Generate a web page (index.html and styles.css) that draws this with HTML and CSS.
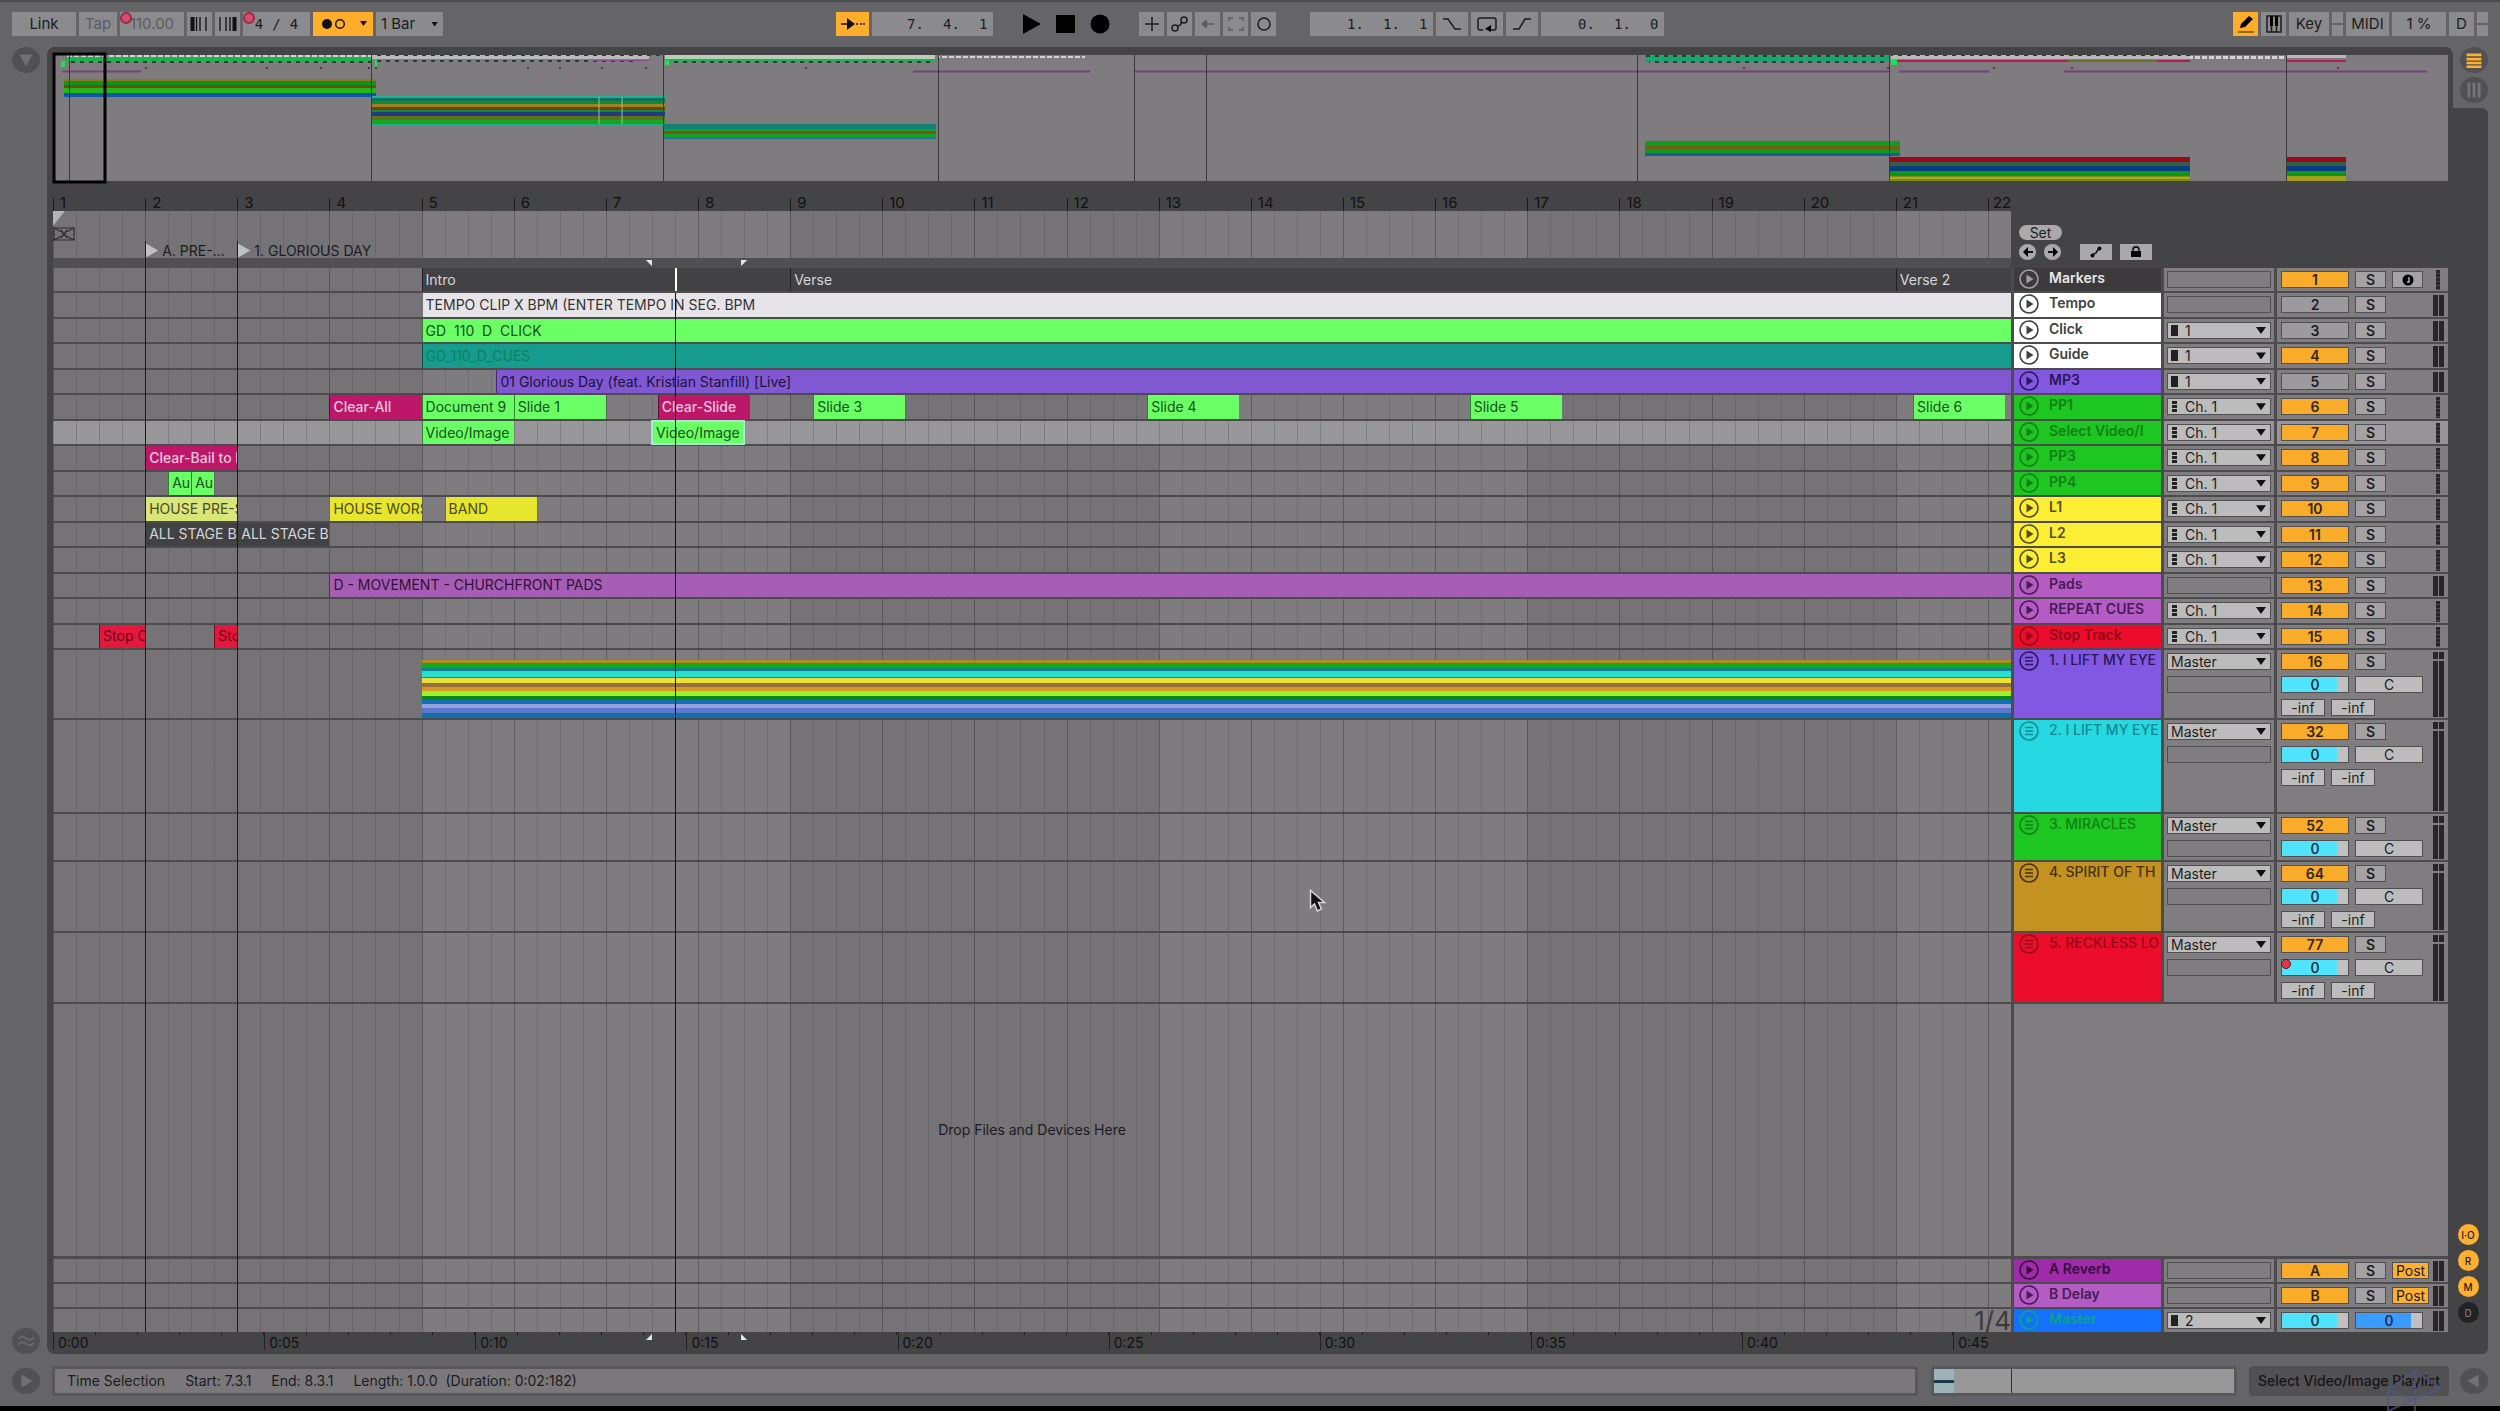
FILE: index.html
```html
<!DOCTYPE html>
<html lang="en">
<head>
<meta charset="utf-8">
<title>Arrangement</title>
<link rel="stylesheet" href="styles.css">
</head>
<body>
<svg class="defs" aria-hidden="true">
  <symbol id="play" viewBox="0 0 20 20"><circle cx="10" cy="10" r="9" fill="none" stroke="currentColor" stroke-width="1.6"/><path d="M7.5 5.5v9l7-4.500z" fill="currentColor"/></symbol>
  <symbol id="group" viewBox="0 0 20 20"><circle cx="10" cy="10" r="9" fill="none" stroke="currentColor" stroke-width="1.600"/><path d="M6 6.500h8M6 10h8M6 13.500h8" stroke="currentColor" stroke-width="1.500"/></symbol>
</svg>

<div class="app">
<header class="topbar">
  <div class="bar-left">
    <button class="tb w64">Link</button>
    <button class="tb w38 dim">Tap</button>
    <button class="tb w64 dim dot">110.00</button>
    <button class="tb w25" aria-label="Nudge down"><svg width="19" height="14"><path d="M2 0v14M6.500 0v14M10 0v14M16 0v14" stroke="#111" stroke-width="1.300"/><path d="M2.500 0v14" stroke="#111" stroke-width="4"/></svg></button>
    <button class="tb w25" aria-label="Nudge up"><svg width="19" height="14"><path d="M2 0v14M8 0v14M12 0v14" stroke="#111" stroke-width="1.300"/><path d="M16.500 0v14" stroke="#111" stroke-width="4"/></svg></button>
    <button class="tb w67 dot sig"><span>4</span><span>/</span><span>4</span></button>
    <button class="tb w60 on" aria-label="Metronome"><svg width="50" height="14"><circle cx="9" cy="7" r="5" fill="#111"/><circle cx="22" cy="7" r="4.300" fill="none" stroke="#111" stroke-width="1.400"/><path d="M42 4h7l-3.500 5z" fill="#111"/></svg></button>
    <button class="tb w67 menu">1 Bar<i class="tri"></i></button>
  </div>
  <div class="bar-mid">
    <button class="tb w33 on" aria-label="Follow"><svg width="24" height="14"><path d="M0 7h8M15 7h2M19 7h2M22 7h2" stroke="#111" stroke-width="1.600"/><path d="M6 1l8 6-8 6z" fill="#111"/></svg></button>
    <button class="tb pos w121"><span>7.</span><span>4.</span><span>1</span></button>
    <div class="transport">
      <button aria-label="Play"><svg width="20" height="20"><path d="M1 0v20l18-10z"/></svg></button>
      <button aria-label="Stop"><svg width="20" height="20"><path d="M0 1h19v18H0z"/></svg></button>
      <button aria-label="Record"><svg width="20" height="20"><circle cx="10" cy="10" r="9.500"/></svg></button>
    </div>
    <div class="set">
      <button class="tb w26" aria-label="Overdub"><svg width="16" height="16"><path d="M8 1v14M1 8h14" class="ln"/></svg></button>
      <button class="tb w26" aria-label="Automation arm"><svg width="18" height="16"><circle cx="13" cy="4" r="3" class="ln"/><circle cx="4" cy="12" r="3" class="ln"/><path d="M10.500 5.500l-1 3.500-3 1" class="ln"/></svg></button>
      <button class="tb w26" aria-label="Re-enable automation"><svg width="16" height="12" class="faint"><path d="M3 6h11" class="ln"/><path d="M1 6l6-5v10z" fill="currentColor"/></svg></button>
      <button class="tb w26" aria-label="Capture"><svg width="16" height="16" class="faint"><path d="M1 5V2h4M11 2h4v3M15 11v3h-4M5 14H1v-3" class="ln"/></svg></button>
      <button class="tb w26" aria-label="Session record"><svg width="16" height="16"><circle cx="8" cy="8" r="6" class="ln"/></svg></button>
    </div>
    <div class="set">
      <button class="tb pos w123"><span>1.</span><span>1.</span><span>1</span></button>
      <button class="tb w32" aria-label="Punch in"><svg width="20" height="14"><path d="M1 2h5l7 10h6" class="ln"/></svg></button>
      <button class="tb w32" aria-label="Loop"><svg width="20" height="16"><path d="M6 14H3c-1 0-2-1-2-2V4c0-1 1-2 2-2h14c1 0 2 1 2 2v8c0 1-1 2-2 2h-4" class="ln"/><path d="M14 9v7l-6-3z"/></svg></button>
      <button class="tb w32" aria-label="Punch out"><svg width="20" height="14"><path d="M1 12h6l6-10h6" class="ln"/></svg></button>
      <button class="tb pos w123"><span>0.</span><span>1.</span><span>0</span></button>
    </div>
  </div>
  <div class="bar-right">
    <button class="tb w26 on" aria-label="Draw mode"><svg width="18" height="18"><path d="M1 17h16" stroke="#7a5200" stroke-width="1.500"/><path d="M3 13l1-4 8-8 4 3-8 8z"/></svg></button>
    <button class="tb w26" aria-label="Computer keyboard"><svg width="16" height="18"><path d="M1 1h14v16H1zM5.500 1v16M10.500 1v16" class="ln"/><path d="M4 1h3v10H4zM9 1h3v10H9z"/></svg></button>
    <button class="tb w40">Key</button>
    <span class="lamp"><i></i><i></i></span>
    <button class="tb w43">MIDI</button>
    <button class="tb w54">1 %</button>
    <button class="tb w26">D</button>
    <span class="lamp"><i></i><i></i></span>
  </div>
</header>

<main class="main">
  <div class="rail">
    <button class="round" aria-label="Show browser"><svg viewBox="0 0 28 28"><path d="M7 8h14l-7 13z"/></svg></button>
    <button class="round" aria-label="Groove pool"><svg viewBox="0 0 28 28"><path d="M6 12c3-4 5-3 8-1s5 3 8-1M6 18c3-4 5-3 8-1s5 3 8-1" fill="none" stroke="#6b6b6d" stroke-width="2"/></svg></button>
  </div>

  <div class="frame">
    <svg class="overview" viewBox="0 0 2395 126" preserveAspectRatio="none">
      <defs>
        <pattern id="tickW" width="7" height="4" patternUnits="userSpaceOnUse"><rect width="5" height="4" fill="#d2d2d2"/></pattern>
        <pattern id="tickD" width="9" height="3" patternUnits="userSpaceOnUse"><rect width="4" height="3" fill="#2c3a38"/></pattern>
      </defs>
      <rect width="2395" height="126" fill="#7e7c7f"/>
      <g>
        <rect x="12" y="0" width="306" height="2" fill="url(#tickW)"/><rect x="12" y="2" width="306" height="4" fill="#12b84a"/><rect x="14" y="6" width="304" height="2" fill="url(#tickD)"/>
        <rect x="318" y="0" width="278" height="4" fill="#b9b9ba"/><rect x="318" y="0" width="292" height="1" fill="url(#tickD)"/><rect x="322" y="5" width="260" height="2" fill="url(#tickD)"/><rect x="540" y="5" width="56" height="1" fill="#8a4a90"/>
        <rect x="612" y="0" width="270" height="4" fill="#b9cbbb"/><rect x="612" y="4" width="270" height="3" fill="#12b84a"/><rect x="620" y="6" width="262" height="2" fill="url(#tickD)"/>
        <rect x="885" y="1" width="147" height="2" fill="url(#tickW)"/>
        <rect x="1592" y="1" width="244" height="6" fill="#14a86c"/><rect x="1592" y="0" width="244" height="2" fill="url(#tickD)"/><rect x="1596" y="6" width="240" height="2" fill="url(#tickD)"/>
        <rect x="1838" y="0" width="299" height="4" fill="#b9b9ba"/><rect x="1838" y="0" width="299" height="1" fill="url(#tickD)"/><rect x="1840" y="5" width="297" height="2" fill="#b51d4f"/><rect x="2015" y="5" width="90" height="2" fill="#6b6f2a"/>
        <rect x="2137" y="1" width="96" height="3" fill="url(#tickW)"/>
        <rect x="2233" y="0" width="60" height="3" fill="#b9b9ba"/><rect x="2233" y="5" width="60" height="2" fill="#b51d4f"/>
        <path d="M322 4h2v8h-2zM612 5h4v5h-4zM1838 4h6v6h-6zM8 6h4v6H8z" fill="#1be34e"/>
        <path d="M92 12h2v2h-2zM213 12h2v2h-2zM267 12h2v2h-2zM315 12h2v2h-2zM322 12h2v2h-2zM474 12h2v2h-2zM506 12h2v2h-2zM548 12h2v2h-2zM592 12h2v2h-2zM752 12h2v2h-2zM1690 12h2v2h-2zM1834 12h2v2h-2zM1940 12h2v2h-2zM2018 12h2v2h-2zM2284 12h2v2h-2z" fill="#702844"/>
      </g>
      <path d="M9 16.500h79M860 16.500h177M1081 16.500h755M1846 16.500h90M2011 16.500h363" stroke="#74407e" stroke-width="2"/>
      <g>
        <rect x="11" y="24" width="312" height="18" fill="#0c9420"/><rect x="11" y="24" width="312" height="2" fill="#8f7a18"/><rect x="11" y="30" width="312" height="3" fill="#704c10"/><rect x="11" y="33" width="312" height="5" fill="#22b81c"/><rect x="11" y="38" width="312" height="4" fill="#1055a8"/>
        <rect x="318" y="41" width="294" height="29" fill="#108c30"/><rect x="318" y="41" width="294" height="2" fill="#20b090"/><rect x="318" y="43" width="294" height="3" fill="#107060"/><rect x="318" y="49" width="294" height="3" fill="#a08020"/><rect x="318" y="52" width="294" height="3" fill="#744010"/><rect x="318" y="57" width="294" height="4" fill="#203c80"/><rect x="318" y="61" width="294" height="4" fill="#60701c"/><rect x="318" y="65" width="294" height="4" fill="#14a820"/><rect x="318" y="69" width="294" height="1" fill="#20b090"/>
        <path d="M546 42v27M569 42v27" stroke="#9cc090"/>
        <rect x="610" y="69" width="273" height="15" fill="#18a024"/><rect x="610" y="69" width="273" height="5" fill="#127f70"/><rect x="610" y="76" width="273" height="3" fill="#705818"/><rect x="610" y="83" width="273" height="1" fill="#2070a0"/>
        <rect x="1592" y="86" width="255" height="15" fill="#109c20"/><rect x="1592" y="91" width="255" height="3" fill="#785c14"/><rect x="1592" y="98" width="255" height="3" fill="#2058a0"/>
        <rect x="1836" y="102" width="301" height="5" fill="#9c0818"/><rect x="1836" y="107" width="301" height="4" fill="#306048"/><rect x="1836" y="111" width="301" height="5" fill="#083c80"/><rect x="1836" y="116" width="301" height="5" fill="#109420"/><rect x="1836" y="121" width="301" height="5" fill="#788c18"/><rect x="1836" y="122" width="301" height="2" fill="#b0a820"/>
        <rect x="2233" y="102" width="60" height="5" fill="#9c0818"/><rect x="2233" y="107" width="60" height="4" fill="#306048"/><rect x="2233" y="111" width="60" height="5" fill="#083c80"/><rect x="2233" y="116" width="60" height="5" fill="#109420"/><rect x="2233" y="121" width="60" height="5" fill="#a0a01c"/>
      </g>
      <path d="M16.500 0v126M318.500 0v126M610.500 0v126M885.500 0v126M1081.500 0v126M1153.500 0v126M1584.500 0v126M1836.500 0v126M2233.500 0v126" stroke="#3a3a3c"/>
      <rect x="1" y="-1" width="51" height="128" fill="none" stroke="#000" stroke-width="3"/>
    </svg>

    <ol class="bars">
      <li>1</li><li>2</li><li>3</li><li>4</li><li>5</li><li>6</li><li>7</li><li>8</li><li>9</li><li>10</li><li>11</li><li>12</li><li>13</li><li>14</li><li>15</li><li>16</li><li>17</li><li>18</li><li>19</li><li>20</li><li>21</li><li>22</li>
    </ol>

    <section class="arrange">
      <div class="guides" aria-hidden="true"><i class="mark" style="grid-column:17"></i><i class="mark" style="grid-column:33"></i><i class="head-line" style="grid-column:109"></i></div>

      <div class="scrub-row">
        <div class="scrub lane">
          <i class="start"></i>
          <svg class="fx" width="22" height="14"><path d="M1 1h20v12H1zM1 1l9 4.500v3L1 13M21 1l-9 4.500v3l9 4.500M7 1h8M7 13h8M8 3l6 8M14 3L8 11" fill="none" stroke="#2c2c2e" stroke-width="1.200"/></svg>
          <div class="locators">
            <span style="grid-column:17/33"><i></i>A. PRE-...</span>
            <span style="grid-column:33/100"><i></i>1. GLORIOUS DAY</span>
          </div>
        </div>
        <div class="tools">
          <button class="pill">Set</button>
          <div>
            <button class="dotbtn" aria-label="Previous locator"><svg width="12" height="12"><path d="M5 6h6" stroke="#111" stroke-width="2"/><path d="M1 6l5-5v10z"/></svg></button>
            <button class="dotbtn" aria-label="Next locator"><svg width="12" height="12"><path d="M1 6h6" stroke="#111" stroke-width="2"/><path d="M11 6L6 1v10z"/></svg></button>
            <button class="tool first" aria-label="Automation mode"><svg width="12" height="12"><circle cx="9.500" cy="2.500" r="2"/><circle cx="2.500" cy="9.500" r="2"/><path d="M2 9l4-2 3-5" fill="none" stroke="#111" stroke-width="1.500"/></svg></button>
            <button class="tool" aria-label="Lock envelopes"><svg width="12" height="12"><path d="M1 5h10v6H1z"/><path d="M3 6V3.500C3 0 9 0 9 3.500V6" fill="none" stroke="#111" stroke-width="1.600"/></svg></button>
          </div>
        </div>
      </div>
      <div class="loopbar"><i class="sel-a" style="grid-column:103/105"></i><i class="sel-b" style="grid-column:119/123"></i></div>

      <div class="tracks">
        <div class="row"><div class="lane"><div class="clip dark" style="grid-column:65/129">Intro</div><div class="clip dark" style="grid-column:129/321">Verse</div><div class="clip dark" style="grid-column:321/341">Verse 2</div><i class="now" style="grid-column:109"></i></div>
          <div class="name c-dark"><svg><use href="#play"/></svg>Markers</div><div class="io"><span class="slot"></span></div>
          <div class="mix"><button class="num on">1</button><button class="solo">S</button><button class="solo" aria-label="Arm"><svg width="12" height="12"><circle cx="6" cy="6" r="5.500"/><path d="M7 3v5M5 8h3" stroke="#aaa" stroke-width="1.500"/></svg></button><i class="meter one"></i></div></div>
        <div class="row"><div class="lane"><div class="clip white" style="grid-column:65/341">TEMPO CLIP X BPM (ENTER TEMPO IN SEG. BPM</div></div>
          <div class="name c-white"><svg><use href="#play"/></svg>Tempo</div><div class="io"><span class="slot"></span></div>
          <div class="mix"><button class="num">2</button><button class="solo">S</button><i class="meter"></i></div></div>
        <div class="row"><div class="lane"><div class="clip green" style="grid-column:65/341">GD&nbsp; 110&nbsp; D&nbsp; CLICK</div></div>
          <div class="name c-white"><svg><use href="#play"/></svg>Click</div><div class="io"><label class="pick out"><select aria-label="Click output"><option>1</option></select></label></div>
          <div class="mix"><button class="num">3</button><button class="solo">S</button><i class="meter"></i></div></div>
        <div class="row"><div class="lane"><div class="clip teal" style="grid-column:65/341">GD_110_D_CUES</div></div>
          <div class="name c-white"><svg><use href="#play"/></svg>Guide</div><div class="io"><label class="pick out"><select aria-label="Guide output"><option>1</option></select></label></div>
          <div class="mix"><button class="num on">4</button><button class="solo">S</button><i class="meter"></i></div></div>
        <div class="row"><div class="lane"><div class="clip violet" style="grid-column:78/341">01 Glorious Day (feat. Kristian Stanfill) [Live]</div></div>
          <div class="name c-violet"><svg><use href="#play"/></svg>MP3</div><div class="io"><label class="pick out"><select aria-label="MP3 output"><option>1</option></select></label></div>
          <div class="mix"><button class="num">5</button><button class="solo">S</button><i class="meter"></i></div></div>
        <div class="row"><div class="lane"><div class="clip pink" style="grid-column:49/65">Clear-All</div><div class="clip green" style="grid-column:65/81">Document 9</div><div class="clip green" style="grid-column:81/97">Slide 1</div><div class="clip pink" style="grid-column:106/122">Clear-Slide</div><div class="clip green" style="grid-column:133/149">Slide 3</div><div class="clip green" style="grid-column:191/207">Slide 4</div><div class="clip green" style="grid-column:247/263">Slide 5</div><div class="clip green" style="grid-column:324/340">Slide 6</div></div>
          <div class="name c-green"><svg><use href="#play"/></svg>PP1</div><div class="io"><label class="pick midi"><select aria-label="PP1 channel"><option>Ch. 1</option></select></label></div>
          <div class="mix"><button class="num on">6</button><button class="solo">S</button><i class="meter one"></i></div></div>
        <div class="row picked"><div class="lane"><div class="clip green" style="grid-column:65/81">Video/Image</div><div class="clip green chosen" style="grid-column:105/121">Video/Image</div></div>
          <div class="name c-green"><svg><use href="#play"/></svg>Select Video/I</div><div class="io"><label class="pick midi"><select aria-label="Video channel"><option>Ch. 1</option></select></label></div>
          <div class="mix"><button class="num on">7</button><button class="solo">S</button><i class="meter one"></i></div></div>
        <div class="row"><div class="lane"><div class="clip pink" style="grid-column:17/33">Clear-Bail to l</div></div>
          <div class="name c-green"><svg><use href="#play"/></svg>PP3</div><div class="io"><label class="pick midi"><select aria-label="PP3 channel"><option>Ch. 1</option></select></label></div>
          <div class="mix"><button class="num on">8</button><button class="solo">S</button><i class="meter one"></i></div></div>
        <div class="row"><div class="lane"><div class="clip green" style="grid-column:21/25">Au</div><div class="clip green" style="grid-column:25/29">Au</div></div>
          <div class="name c-green"><svg><use href="#play"/></svg>PP4</div><div class="io"><label class="pick midi"><select aria-label="PP4 channel"><option>Ch. 1</option></select></label></div>
          <div class="mix"><button class="num on">9</button><button class="solo">S</button><i class="meter one"></i></div></div>
        <div class="row"><div class="lane"><div class="clip pale" style="grid-column:17/33">HOUSE PRE-S</div><div class="clip yellow" style="grid-column:49/65">HOUSE WORS</div><div class="clip yellow" style="grid-column:69/85">BAND</div></div>
          <div class="name c-yellow"><svg><use href="#play"/></svg>L1</div><div class="io"><label class="pick midi"><select aria-label="L1 channel"><option>Ch. 1</option></select></label></div>
          <div class="mix"><button class="num on">10</button><button class="solo">S</button><i class="meter one"></i></div></div>
        <div class="row"><div class="lane"><div class="clip dark" style="grid-column:17/33">ALL STAGE Bl</div><div class="clip dark" style="grid-column:33/49">ALL STAGE Bl</div></div>
          <div class="name c-yellow"><svg><use href="#play"/></svg>L2</div><div class="io"><label class="pick midi"><select aria-label="L2 channel"><option>Ch. 1</option></select></label></div>
          <div class="mix"><button class="num on">11</button><button class="solo">S</button><i class="meter one"></i></div></div>
        <div class="row"><div class="lane"></div>
          <div class="name c-yellow"><svg><use href="#play"/></svg>L3</div><div class="io"><label class="pick midi"><select aria-label="L3 channel"><option>Ch. 1</option></select></label></div>
          <div class="mix"><button class="num on">12</button><button class="solo">S</button><i class="meter one"></i></div></div>
        <div class="row"><div class="lane"><div class="clip mauve" style="grid-column:49/341">D - MOVEMENT - CHURCHFRONT PADS</div></div>
          <div class="name c-mauve"><svg><use href="#play"/></svg>Pads</div><div class="io"><span class="slot"></span></div>
          <div class="mix"><button class="num on">13</button><button class="solo">S</button><i class="meter"></i></div></div>
        <div class="row"><div class="lane"></div>
          <div class="name c-mauve"><svg><use href="#play"/></svg>REPEAT CUES</div><div class="io"><label class="pick midi"><select aria-label="Repeat cues channel"><option>Ch. 1</option></select></label></div>
          <div class="mix"><button class="num on">14</button><button class="solo">S</button><i class="meter one"></i></div></div>
        <div class="row"><div class="lane"><div class="clip red" style="grid-column:9/17">Stop C</div><div class="clip red" style="grid-column:29/33">Sto</div></div>
          <div class="name c-red"><svg><use href="#play"/></svg>Stop Track</div><div class="io"><label class="pick midi"><select aria-label="Stop track channel"><option>Ch. 1</option></select></label></div>
          <div class="mix"><button class="num on">15</button><button class="solo">S</button><i class="meter one"></i></div></div>
      </div>

      <div class="row big h70"><div class="lane"><div class="stems" style="grid-column:65/341"></div></div>
        <div class="name c-violet"><svg><use href="#group"/></svg>1. I LIFT MY EYE</div><div class="io"><label class="pick"><select aria-label="Group 1 output"><option>Master</option></select></label><span class="slot"></span></div>
        <div class="mix"><button class="num on">16</button><button class="solo">S</button><input class="vol" aria-label="Volume" value="0"><input class="pan" aria-label="Pan" value="C"><input class="inf" aria-label="Send A" value="-inf"><input class="inf" aria-label="Send B" value="-inf"><i class="meter"></i></div></div>
      <div class="row big h94"><div class="lane"></div>
        <div class="name c-cyan"><svg><use href="#group"/></svg>2. I LIFT MY EYE</div><div class="io"><label class="pick"><select aria-label="Group 2 output"><option>Master</option></select></label><span class="slot"></span></div>
        <div class="mix"><button class="num on">32</button><button class="solo">S</button><input class="vol" aria-label="Volume" value="0"><input class="pan" aria-label="Pan" value="C"><input class="inf" aria-label="Send A" value="-inf"><input class="inf" aria-label="Send B" value="-inf"><i class="meter"></i></div></div>
      <div class="row big h48"><div class="lane"></div>
        <div class="name c-green"><svg><use href="#group"/></svg>3. MIRACLES</div><div class="io"><label class="pick"><select aria-label="Group 3 output"><option>Master</option></select></label><span class="slot"></span></div>
        <div class="mix"><button class="num on">52</button><button class="solo">S</button><input class="vol" aria-label="Volume" value="0"><input class="pan" aria-label="Pan" value="C"><i class="meter"></i></div></div>
      <div class="row big h71"><div class="lane"></div>
        <div class="name c-ochre"><svg><use href="#group"/></svg>4. SPIRIT OF TH</div><div class="io"><label class="pick"><select aria-label="Group 4 output"><option>Master</option></select></label><span class="slot"></span></div>
        <div class="mix"><button class="num on">64</button><button class="solo">S</button><input class="vol" aria-label="Volume" value="0"><input class="pan" aria-label="Pan" value="C"><input class="inf" aria-label="Send A" value="-inf"><input class="inf" aria-label="Send B" value="-inf"><i class="meter"></i></div></div>
      <div class="row big h71"><div class="lane"></div>
        <div class="name c-red"><svg><use href="#group"/></svg>5. RECKLESS LO</div><div class="io"><label class="pick"><select aria-label="Group 5 output"><option>Master</option></select></label><span class="slot"></span></div>
        <div class="mix"><button class="num on">77</button><button class="solo">S</button><span class="volwrap"><input class="vol" aria-label="Volume" value="0"></span><input class="pan" aria-label="Pan" value="C"><input class="inf" aria-label="Send A" value="-inf"><input class="inf" aria-label="Send B" value="-inf"><i class="meter"></i></div></div>

      <div class="row drop"><div class="lane"><p>Drop Files and Devices Here</p></div><div class="blank"></div></div>

      <div class="row ret"><div class="lane"></div>
        <div class="name c-purple"><svg><use href="#play"/></svg>A Reverb</div><div class="io"><span class="slot"></span></div>
        <div class="mix"><button class="num on">A</button><button class="solo">S</button><button class="post">Post</button><i class="meter"></i></div></div>
      <div class="row ret"><div class="lane"></div>
        <div class="name c-mauve"><svg><use href="#play"/></svg>B Delay</div><div class="io"><span class="slot"></span></div>
        <div class="mix"><button class="num on">B</button><button class="solo">S</button><button class="post">Post</button><i class="meter"></i></div></div>
      <div class="row ret last"><div class="lane"><b class="zoomlevel">1/4</b></div>
        <div class="name c-blue"><svg><use href="#play"/></svg>Master</div><div class="io"><label class="pick out"><select aria-label="Master output"><option>2</option></select></label></div>
        <div class="mix"><input class="vol" aria-label="Master volume" value="0"><input class="cue" aria-label="Cue volume" value="0"><i class="meter"></i></div></div>
    </section>

    <div class="timebar">
      <ol class="times"><li>0:00</li><li>0:05</li><li>0:10</li><li>0:15</li><li>0:20</li><li>0:25</li><li>0:30</li><li>0:35</li><li>0:40</li><li>0:45</li></ol>
      <div class="selbottom"><i class="sel-c" style="grid-column:103/105"></i><i class="sel-d" style="grid-column:119/123"></i></div>
    </div>
  </div>

  <aside class="side">
    <div class="views">
      <button class="round" aria-label="Arrangement view"><svg viewBox="0 0 28 28"><path d="M6 7h16v3H6zM6 11.500h16v3H6zM6 16h16v2.500H6zM6 20h16v2.500H6z" class="gold"/></svg></button>
      <button class="round" aria-label="Session view"><svg viewBox="0 0 28 28"><path d="M7 6h3v16H7zM12.500 6h3v16h-3zM18 6h3v16h-3z" class="greyed"/></svg></button>
    </div>
    <div class="sections"><button class="chip">I·O</button><button class="chip">R</button><button class="chip">M</button><button class="chip off">D</button></div>
  </aside>
</main>

<footer class="status">
  <button class="round" aria-label="Toggle info"><svg viewBox="0 0 28 28"><path d="M9 7v14l12-7z"/></svg></button>
  <div class="info"><span>Time Selection</span><span>Start: 7.3.1</span><span>End: 8.3.1</span><span>Length: 1.0.0&nbsp; (Duration: 0:02:182)</span></div>
  <div class="mini"><i class="note"></i><i class="cursor-line"></i></div>
  <div class="device">Select Video/Image Playlist</div>
  <button class="round" aria-label="Toggle detail"><svg viewBox="0 0 28 28"><path d="M19 7v14L7 14z"/></svg></button>
</footer>
</div>

<svg class="pointer" width="18" height="24" aria-hidden="true"><path d="M1.500 1.500v17l4-3.500 3 7 4-2-3-6.500h6z" fill="#111" stroke="#d8d8d8" stroke-width="1.500"/></svg>
<svg class="logo" width="56" height="42" aria-hidden="true"><path d="M2 42V21L29 2l26 17-28 12-25 11M29 2v40M2 21l25 10" fill="none" stroke="#55558c" stroke-width="2" opacity=".7"/></svg>
</body>
</html>
```
FILE: styles.css
```css
* { box-sizing: border-box; }
body { margin: 0; background: #000; color: #1c1c1e; font: 500 14px/16px Inter, "Liberation Sans", sans-serif; overflow: hidden; }
button, input, select { font: inherit; color: inherit; margin: 0; padding: 0; border: 0; border-radius: 0; }
button { cursor: pointer; display: flex; align-items: center; justify-content: center; white-space: nowrap; }
ol, p { margin: 0; padding: 0; list-style: none; }
.defs { display: none; }
.ln { fill: none; stroke: currentColor; stroke-width: 1.5; }
.faint { color: #5c5c5e; }
.app { height: calc(100vh - 5px); display: flex; flex-direction: column; background: #656567; border-top: 2px solid #4e4e50; }

/* Control bar */
.topbar { flex: none; height: 45px; padding: 10px 12px 0; display: grid; grid-template-columns: 1fr auto 1fr; align-items: start; }
.bar-left, .bar-mid, .bar-right, .set { display: flex; gap: 3px; }
.bar-right { justify-content: flex-end; }
.tb { height: 24px; background: #8b8b8d; font-weight: 400; font-size: 15px; position: relative; }
.tb.on { background: #ffad2b; }
.dim { color: #5c5c5e; }
.dot::before { content: ""; position: absolute; left: 0; top: 0; width: 8px; height: 8px; border-radius: 50%; border: 2px solid #a0254a; background: #d05068; }
.w25 { width: 25px; } .w26 { width: 25px; } .w32 { width: 32px; } .w33 { width: 33px; } .w38 { width: 38px; } .w40 { width: 40px; } .w43 { width: 43px; }
.w54 { width: 54px; } .w60 { width: 60px; } .w64 { width: 64px; } .w67 { width: 67px; } .w121 { width: 121px; } .w123 { width: 123px; }
.sig { gap: 9px; font-family: "DejaVu Sans Mono", monospace; font-size: 14px; }
.menu { gap: 16px; }
.tri { width: 7px; height: 5px; background: #111; clip-path: polygon(0 0, 100% 0, 50% 100%); }
.pos { justify-content: flex-end; font-family: "DejaVu Sans Mono", monospace; font-size: 14px; text-align: left; }
.pos span { width: 36px; }
.pos span:last-child { width: 14px; }
.transport { display: flex; gap: 14px; margin: 2px 26px 0 26px; }
.transport button { background: none; width: 20px; height: 20px; }
.bar-mid { gap: 3px; }
.set + .set { margin-left: 31px; }
.lamp { width: 11px; display: flex; flex-direction: column; gap: 2px; height: 24px; }
.lamp i { flex: 1; background: #8b8b8d; }

/* Main area */
.main { flex: 1; min-height: 0; display: flex; padding-right: 12px; }
.rail { width: 47px; display: flex; flex-direction: column; justify-content: space-between; align-items: center; padding: 0 0 0 5px; }
.round { width: 28px; height: 26px; border-radius: 50%; background: #515153; }
.round svg { width: 26px; height: 26px; fill: #717173; }
.round .gold { fill: #ffb02e; }
.round .greyed { fill: #757577; }
.frame { flex: 1; min-width: 0; display: flex; flex-direction: column; background: #444446; border-radius: 8px 8px 0 8px; padding: 8px 5px 0 6px; }
.overview { flex: none; width: 100%; height: 126px; overflow: visible; display: block; }
.bars { flex: none; height: 30px; margin-right: 437px; display: grid; grid-template-columns: repeat(21, 4fr) 1fr; align-items: end; color: #111; font-size: 15px; font-weight: 400; }
.bars li { min-width: 0; height: 16px; line-height: 15px; padding-left: 7px; position: relative; }
.bars li:last-child { padding-left: 5px; }
.bars li::before { content: ""; position: absolute; left: 0; bottom: 0; width: 1px; height: 13px; background: #1c1c1e; }
.arrange { flex: 1; min-height: 0; display: flex; flex-direction: column; position: relative; }

/* Lanes: sixteen columns per bar, light and dark four-bar bands */
.lane, .loopbar, .locators, .guides, .selbottom { display: grid; grid-template-columns: repeat(340, minmax(0, 1fr)); }
.lane {
  background:
    repeating-linear-gradient(90deg, rgba(20,20,22,.2) 0 1px, transparent 1px calc(400% / 85)),
    repeating-linear-gradient(90deg, rgba(30,30,32,.15) 0 1px, transparent 1px calc(100% / 85)),
    repeating-linear-gradient(90deg, #757376 0 calc(1600% / 85), #7e7c7f calc(1600% / 85) calc(3200% / 85));
  grid-template-rows: minmax(0, 1fr);
}
.guides { position: absolute; z-index: 2; left: 0; right: 437px; top: 0; bottom: 0; pointer-events: none; }
.guides i { width: 1px; background: #1a1a1c; }
.mark { margin-top: 30px; }
.guides .head-line { margin-top: 82px; background: #111; }
.now { width: 2px; background: #fff; grid-row: 1; z-index: 3; }
.scrub-row { flex: none; height: 47px; display: grid; grid-template-columns: minmax(0, 1fr) 434px; column-gap: 3px; }
.scrub { display: flex; flex-direction: column; gap: 1px; }
.start { width: 12px; height: 15px; background: #b4b4b6; clip-path: polygon(0 0, 100% 0, 0 100%); }
.fx { display: block; }
.locators span { display: flex; align-items: center; gap: 4px; white-space: nowrap; min-width: 0; height: 17px; font-size: 14px; font-weight: 400; }
.locators i { width: 13px; height: 15px; background: #c0c0c2; clip-path: polygon(0 0, 100% 50%, 0 100%); }
.tools { padding: 14px 0 0 5px; display: flex; flex-direction: column; gap: 4px; }
.tools div { display: flex; gap: 8px; }
.pill { width: 43px; height: 15px; border-radius: 8px; background: #a9a9ab; font-size: 14px; font-weight: 400; }
.dotbtn { width: 17px; height: 16px; border-radius: 50%; background: #a9a9ab; }
.tool { width: 32px; height: 16px; background: #a9a9ab; }
.tool.first { margin-left: 11px; }
.loopbar { flex: none; height: 10px; margin-right: 437px; background: #505052; align-items: center; }
.sel-a, .sel-b, .sel-c, .sel-d { width: 6px; height: 6px; background: #e8e8e8; }
.sel-a { clip-path: polygon(0 0, 100% 0, 100% 100%); justify-self: end; }
.sel-b { clip-path: polygon(0 0, 100% 0, 0 100%); justify-self: center; }
.sel-c { clip-path: polygon(100% 0, 100% 100%, 0 100%); justify-self: end; }
.sel-d { clip-path: polygon(0 0, 100% 100%, 0 100%); justify-self: center; }

.tracks { flex: none; height: 382px; display: grid; grid-auto-rows: minmax(0, 1fr); }
.row { display: grid; grid-template-columns: minmax(0, 1fr) 147px 110px 171px; grid-template-rows: minmax(0, 1fr); column-gap: 3px; background: #4c4c4e; padding-bottom: 2px; min-height: 0; }
.h70 { flex: none; height: 70px; }
.h94 { flex: none; height: 94px; }
.h48 { flex: none; height: 48px; }
.h71 { flex: none; height: 71px; }
.picked .lane { background: repeating-linear-gradient(90deg, rgba(30,30,32,.2) 0 1px, transparent 1px calc(100% / 85)), #979799; }
.picked .io, .picked .mix { background: #969496; }
.clip { grid-row: 1; overflow: hidden; white-space: nowrap; padding-left: 3px; display: flex; align-items: center; font-size: 14px; font-weight: 400; border-left: 1px solid rgba(0,0,0,.5); }
.dark { background: #424244; color: #d6d6d8; }
.white { background: #e6e4e8; color: #333; }
.green { background: #6bff66; color: #14501a; }
.teal { background: #169c8c; color: #0d8068; }
.violet { background: #8059d2; color: #1c1040; }
.pink { background: #bd1769; color: #f4c4dc; font-weight: 500; }
.pale { background: #d8e67c; color: #4a4c20; }
.yellow { background: #e6e62e; color: #4c4a08; }
.mauve { background: #a65db4; color: #321238; }
.red { background: #e6173c; color: #6c0418; }
.chosen { outline: 2px solid #a8e8d4; outline-offset: -1px; }
.stems { margin: 10px 0 0; background: linear-gradient(#b08c28 0 3px, #14a818 3px 8px, #10808c 8px 11px, #28e0d0 11px 17px, #128c98 17px 18px, #ece03c 18px 23px, #98703c 23px 27px, #d89828 27px 31px, #98f428 31px 36px, #10841c 36px 40px, #1070b8 40px 44px, #98a0dc 44px 48px, #5c78cc 48px 53px, #1070a8 53px); }

/* Track headers */
.name { display: flex; gap: 10px; padding: 0 5px; height: 100%; overflow: hidden; white-space: nowrap; font-weight: 600; font-size: 14px; line-height: 20px; color: #333; }
.name svg { flex: none; width: 20px; height: 20px; margin-top: 1px; }
.c-dark { background: #3c3a3c; color: #e8e8e8; }
.c-dark svg { color: #a0a0a0; }
.c-white { background: #fff; color: #404040; }
.c-violet { background: #8257e2; color: #2a1858; }
.c-green { background: #1ec622; color: #108016; }
.c-yellow { background: #fcee34; color: #544e10; }
.c-mauve { background: #b45cc4; color: #481c54; }
.c-red { background: #ec0c2c; color: #900818; }
.c-cyan { background: #26d8e2; color: #128890; }
.c-ochre { background: #c49220; color: #483008; }
.c-purple { background: #9e2ca8; color: #380c40; }
.c-blue { background: #1470ff; color: #0ca488; }
.big .name { font-weight: 500; }
.io, .mix { background: #7f7d80; }
.io { padding: 3px 3px 0; display: flex; flex-direction: column; gap: 6px; }
.slot { height: 17px; border: 1px solid #505052; flex: none; }
.pick { height: 17px; display: flex; align-items: center; border: 1px solid #505052; background: #bcbcbc; position: relative; flex: none; }
.pick select { appearance: none; background: none; width: 100%; height: 15px; line-height: 15px; padding-left: 3px; font-weight: 400; font-size: 14px; }
.out select, .midi select { padding-left: 17px; }
.pick::after { content: ""; position: absolute; right: 4px; top: 4px; width: 10px; height: 7px; background: #111; clip-path: polygon(0 0, 100% 0, 50% 100%); pointer-events: none; }
.out::before { content: ""; position: absolute; left: 3px; top: 2px; width: 7px; height: 11px; background: #222; }
.midi::before { content: ""; position: absolute; left: 4px; top: 2px; width: 5px; height: 12px; background: repeating-linear-gradient(#222 0 3px, #bcbcbc 3px 4px); }
.mix { position: relative; display: flex; flex-wrap: wrap; gap: 6px; align-content: flex-start; padding: 3px 18px 0 4px; }
.mix button, .mix input { height: 17px; border: 1px solid #505052; text-align: center; line-height: 15px; }
.num { width: 68px; background: #9c9a9c; font-weight: 600; }
.num.on { background: #f8ac2a; color: #33240a; }
.solo { width: 31px; background: #a4a2a4; font-weight: 600; }
.post { width: 37px; background: #ffb02e; font-weight: 400; }
.vol { width: 68px; background: linear-gradient(90deg, #50e4fc 84%, #c0c0c0 84%); }
.cue { width: 68px; background: linear-gradient(90deg, #3a9cff 84%, #c0c0c0 84%); }
.pan { width: 68px; background: #bcbcbc; font-weight: 400; }
.inf { width: 44px; background: #bcbcbc; font-weight: 400; }
.volwrap { position: relative; display: flex; }
.volwrap::before { content: ""; position: absolute; left: 0; top: 0; width: 8px; height: 8px; border-radius: 50%; border: 1px solid #601020; background: #e03848; }
.meter { position: absolute; right: 4px; top: 2px; bottom: 1px; width: 11px; background: linear-gradient(90deg, #262628 0 5px, transparent 5px 6px, #262628 6px); }
.meter.one { width: 4px; right: 8px; background: repeating-linear-gradient(#262628 0 3px, #48484a 3px 4px); }
.big .meter { background: linear-gradient(#7f7d80, #7f7d80) 0 7px / 11px 2px no-repeat, linear-gradient(90deg, #262628 0 5px, transparent 5px 6px, #262628 6px); }

.drop { flex: 1; grid-template-columns: minmax(0, 1fr) 434px; padding-bottom: 3px; }
.drop .lane { align-items: center; }
.drop p { grid-column: 1 / -1; text-align: center; font-size: 14px; font-weight: 400; }
.blank { background: #7f7d80; }
.ret { flex: none; height: 25px; }
.ret.last { height: 23px; padding-bottom: 0; }
.zoomlevel { grid-column: 300 / -1; justify-self: end; font-size: 26px; line-height: 23px; font-weight: 400; color: #3a3a3c; }

.timebar { flex: none; height: 22px; margin-right: 437px; position: relative; }
.times { height: 22px; display: grid; grid-template-columns: repeat(9, 500fr) 137fr; font-weight: 400; color: #111; }
.times li { min-width: 0; padding: 3px 0 0 4px; line-height: 15px; border-left: 1px solid #222; background: repeating-linear-gradient(90deg, transparent 0 41px, #1c1c1e 41px 42px) 0 0 / 100% 3px no-repeat; height: 18px; }
.times li:last-child { background: none; }
.selbottom { position: absolute; left: 0; right: 0; top: 2px; }

.side { width: 35px; display: flex; flex-direction: column; }
.views { height: 61px; display: flex; flex-direction: column; align-items: center; gap: 4px; padding-left: 7px; }
.sections { flex: 1; background: #444446; border-radius: 0 6px 6px 0; display: flex; flex-direction: column; align-items: center; justify-content: flex-end; gap: 5px; padding: 0 5px 31px 0; }
.chip { width: 21px; height: 21px; border-radius: 50%; background: #ffb02e; font-size: 10px; font-weight: 500; }
.chip.off { background: #222224; color: #77777a; }

/* Status bar */
.status { flex: none; height: 52px; padding: 12px 12px 10px; display: flex; align-items: center; }
.info { flex: 1; height: 30px; margin: 0 13px 0 12px; padding: 0 12px; border: 3px solid #58585a; border-radius: 3px; background: #7a787b; display: flex; align-items: center; gap: 20px; font-size: 14px; font-weight: 400; }
.mini { width: 306px; height: 30px; border: 3px solid #58585a; border-radius: 3px; background: #989898; display: flex; }
.note { width: 20px; background: linear-gradient(transparent 11px, #18384a 11px 14px, transparent 14px) #9cb4b8; }
.cursor-line { width: 1px; margin-left: 57px; background: #333; }
.device { width: 200px; height: 30px; margin: 0 11px 0 12px; border-radius: 4px; background: #515153; color: #151517; display: flex; align-items: center; justify-content: center; white-space: nowrap; }
.pointer { position: absolute; left: 1309px; top: 889px; z-index: 5; }
.logo { position: absolute; right: 58px; bottom: 0; z-index: 5; }
```
